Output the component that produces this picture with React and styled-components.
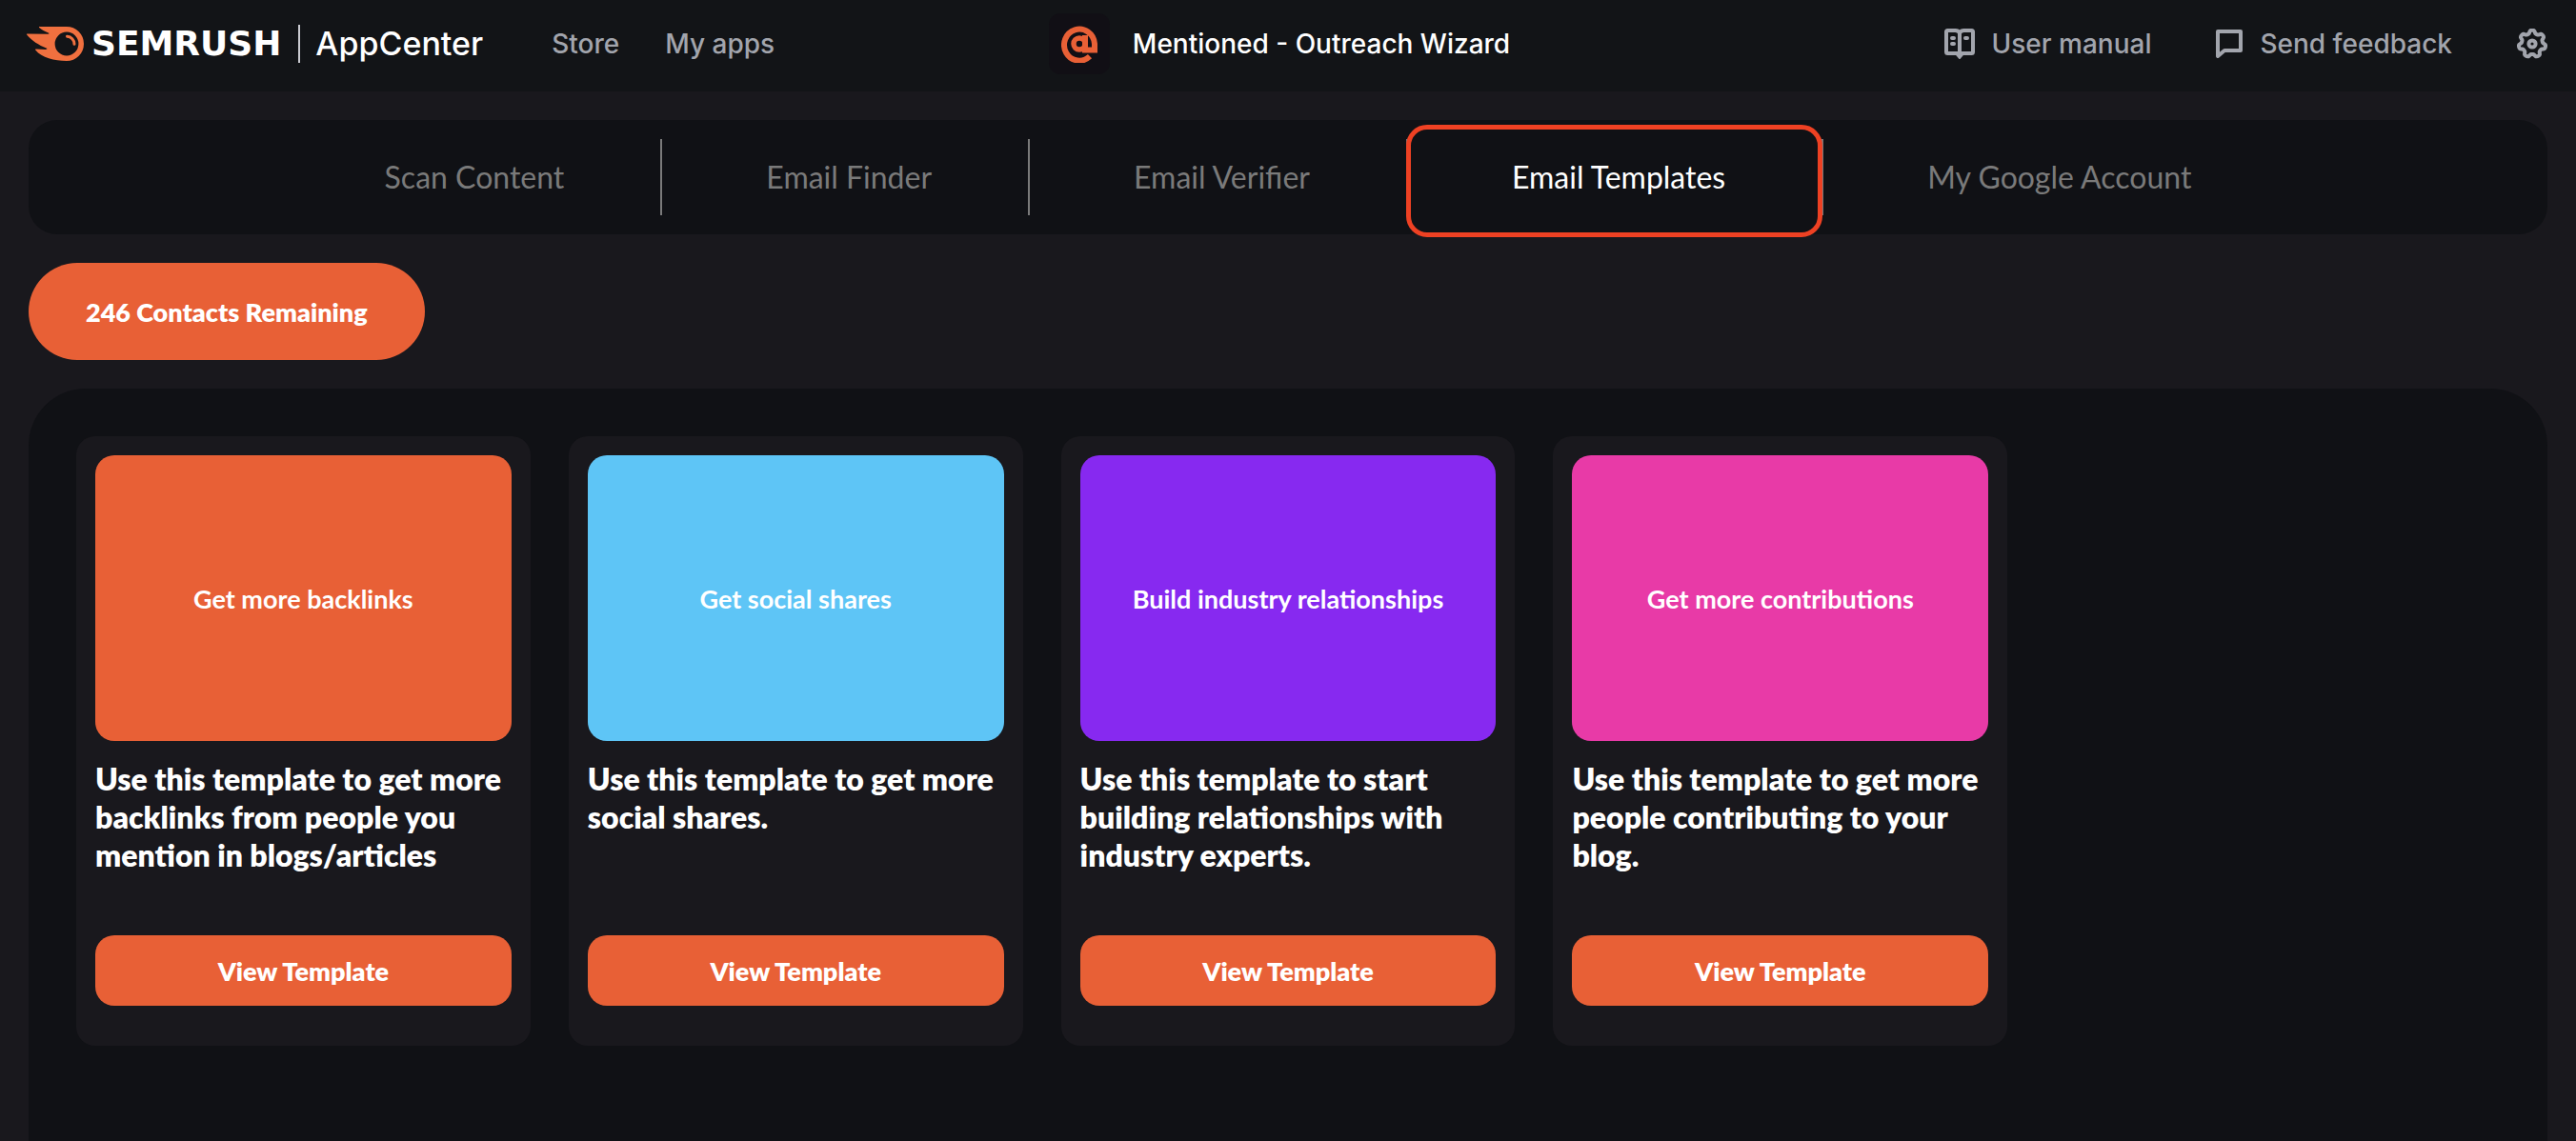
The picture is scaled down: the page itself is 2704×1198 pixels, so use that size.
import React from "react";
import styled, { createGlobalStyle } from "styled-components";

const tabs = [
  { label: "Scan Content" },
  { label: "Email Finder" },
  { label: "Email Verifier" },
  { label: "Email Templates", active: true },
  { label: "My Google Account" },
];

const templates = [
  {
    title: "Get more backlinks",
    color: "#e86036",
    text: "Use this template to get more backlinks from people you mention in blogs/articles",
  },
  {
    title: "Get social shares",
    color: "#5ec5f6",
    text: "Use this template to get more social shares.",
  },
  {
    title: "Build industry relationships",
    color: "#8729f0",
    text: "Use this template to start building relationships with industry experts.",
  },
  {
    title: "Get more contributions",
    color: "#e83aa7",
    text: "Use this template to get more people contributing to your blog.",
  },
];

// outline of a soft gear with seven teeth, one of them pointing up
const gearPoints = Array.from({ length: 112 }, (_, i) => {
  const angle = (i / 112) * Math.PI * 2;
  const wave = Math.tanh(2 * Math.cos(7 * angle));
  const radius = 12.6 + 1.7 * wave;
  const x = 16 + radius * Math.sin(angle);
  const y = 16 - radius * Math.cos(angle);
  return `${x.toFixed(2)},${y.toFixed(2)}`;
}).join(" ");

function FlameIcon() {
  return (
    <svg width="60" height="36" viewBox="0 0 60 36" fill="none">
      <path
        fill="#f0703f"
        fillRule="evenodd"
        d="M13.400 0H42a18 18 0 0 1 0 36C29 36 16 33 9.200 24.600c-.5-.8 0-1.200.8-1.100l9.800.4c1.800.1 1.900-1 .8-1.400C13 19.500 5 14.500.2 8.500c-.5-.7 0-1.100.7-1L22.500 7.800c1.200 0 1.200-.8.3-1.200C19 5 15.500 3.200 13.200 1c-.5-.5-.3-1 .2-1ZM42 5.600a12.400 12.400 0 1 0 0 24.800a12.400 12.400 0 0 0 0-24.800Z"
      />
      <path
        d="M42.500 10.200a8 8 0 0 1 7.500 8"
        stroke="#f0703f"
        strokeWidth="3"
        strokeLinecap="round"
      />
    </svg>
  );
}

function AtIcon() {
  return (
    <svg width="38" height="40" viewBox="0 0 38 40" fill="none">
      <path
        d="M30 33.200A16 16.500 0 1 1 35 20v6.500h-10V11"
        stroke="#e86036"
        strokeWidth="6"
      />
      <circle cx="19" cy="20" r="6" stroke="#e86036" strokeWidth="5.500" />
    </svg>
  );
}

function ManualIcon() {
  return (
    <svg width="32" height="32" viewBox="0 0 32 32" fill="none">
      <path
        d="M16 4.500C15 2.800 13.500 2 11.500 2H3.500A1.500 1.500 0 0 0 2 3.500v21A1.500 1.500 0 0 0 3.500 26H13l3 3.500 3-3.500h9.500a1.500 1.500 0 0 0 1.500-1.500v-21A1.500 1.500 0 0 0 28.500 2h-8C18.500 2 17 2.800 16 4.500ZM16 4.500V28"
        stroke="currentColor"
        strokeWidth="4"
      />
      <path
        d="M8 10h2M8 16h2M22 10h2"
        stroke="currentColor"
        strokeWidth="4"
        strokeLinecap="round"
      />
    </svg>
  );
}

function FeedbackIcon() {
  return (
    <svg width="28" height="30" viewBox="0 0 28 30" fill="none">
      <path
        d="M2 2h24v20H9l-7 6Z"
        stroke="currentColor"
        strokeWidth="4"
        strokeLinejoin="round"
      />
    </svg>
  );
}

function GearIcon() {
  return (
    <svg width="32" height="32" viewBox="0 0 32 32" fill="none">
      <polygon
        points={gearPoints}
        stroke="currentColor"
        strokeWidth="4"
        strokeLinejoin="round"
      />
      <circle cx="16" cy="16" r="3.600" stroke="currentColor" strokeWidth="4" />
    </svg>
  );
}

export default function App() {
  return (
    <>
      <GlobalStyle />
      <Page>
        <Header>
          <HeaderLeft>
            <Brand href="#">
              <FlameIcon />
              <Wordmark>SEMRUSH</Wordmark>
              <BrandLine />
              <Product>AppCenter</Product>
            </Brand>
            <HeaderLink href="#">Store</HeaderLink>
            <HeaderLink href="#">My apps</HeaderLink>
          </HeaderLeft>
          <AppTitle>
            <AppBadge>
              <AtIcon />
            </AppBadge>
            <AppName>Mentioned - Outreach Wizard</AppName>
          </AppTitle>
          <HeaderRight>
            <HeaderLink href="#">
              <ManualIcon />
              User manual
            </HeaderLink>
            <HeaderLink href="#">
              <FeedbackIcon />
              Send feedback
            </HeaderLink>
            <IconButton aria-label="Settings">
              <GearIcon />
            </IconButton>
          </HeaderRight>
        </Header>

        <Main>
          <Tabs>
            {tabs.map((tab) => (
              <Tab key={tab.label} href="#" $active={tab.active}>
                {tab.label}
              </Tab>
            ))}
          </Tabs>
          <Contacts>246 Contacts Remaining</Contacts>
          <Panel>
            {templates.map((item) => (
              <Card key={item.title}>
                <Cover $color={item.color}>{item.title}</Cover>
                <Description>{item.text}</Description>
                <ViewButton>View Template</ViewButton>
              </Card>
            ))}
          </Panel>
        </Main>
      </Page>
    </>
  );
}

// Styled Components ............

const GlobalStyle = createGlobalStyle`
  * {
    box-sizing: border-box;
  }
  body {
    margin: 0;
    background: #19181d;
    font-family: Lato, sans-serif;
    color: #fff;
  }
  a {
    color: inherit;
    text-decoration: none;
  }
  button {
    border: 0;
    font-family: inherit;
    color: inherit;
    cursor: pointer;
  }
  svg {
    display: block;
    flex-shrink: 0;
  }
`;
const Page = styled.div`
  min-height: 100vh;
  display: flex;
  flex-direction: column;
`;
const Header = styled.header`
  display: grid;
  grid-template-columns: 1fr auto 1fr;
  align-items: center;
  height: 96px;
  padding: 0 30px 4px 12px;
  background: #121417;
  font-family: Inter, sans-serif;
  white-space: nowrap;
`;
const HeaderLeft = styled.div`
  display: flex;
  align-items: center;
  gap: 48px;
`;
const Brand = styled.a`
  display: flex;
  align-items: center;
  padding: 0 24px 0 16px;
`;
const Wordmark = styled.span`
  margin-left: 8px;
  font-family: "DejaVu Sans", sans-serif;
  font-size: 36px;
  font-weight: 700;
  line-height: 40px;
`;
const BrandLine = styled.span`
  width: 2px;
  height: 40px;
  margin: 0 16px 0 18px;
  background: #c9cad0;
`;
const Product = styled.span`
  font-size: 34px;
  font-weight: 500;
  line-height: 40px;
`;
const HeaderLink = styled.a`
  display: flex;
  align-items: center;
  gap: 18px;
  font-size: 28px;
  font-weight: 500;
  line-height: 40px;
  color: #a2a5ad;
`;
const AppTitle = styled.div`
  display: flex;
  align-items: center;
  gap: 24px;
`;
const AppBadge = styled.div`
  display: flex;
  align-items: center;
  justify-content: center;
  width: 64px;
  height: 64px;
  border-radius: 12px;
  background: #110f15;
`;
const AppName = styled.h1`
  margin: 0;
  font-size: 28px;
  font-weight: 500;
  line-height: 40px;
`;
const HeaderRight = styled.div`
  display: flex;
  align-items: center;
  justify-content: flex-end;
  gap: 68px;
`;
const IconButton = styled.button`
  padding: 0;
  background: none;
  color: #a2a5ad;
`;
const Main = styled.main`
  flex: 1;
  display: flex;
  flex-direction: column;
  align-items: flex-start;
  gap: 30px;
  padding: 30px 30px 0;
`;
const Tabs = styled.nav`
  align-self: stretch;
  display: flex;
  align-items: center;
  justify-content: center;
  gap: 8px;
  height: 120px;
  border-radius: 30px;
  background: #101115;
`;
const Tab = styled.a`
  position: relative;
  padding: 0 101px;
  font-size: 32px;
  line-height: 80px;
  white-space: nowrap;
  color: ${(props) => (props.$active ? "#fff" : "#7a7a7a")};
  border-right: 2px solid #7a7a7a;
  &:last-child {
    border-right: 0;
  }
  ${(props) =>
    props.$active &&
    `
    &::after {
      content: "";
      position: absolute;
      inset: -15px -1px -23px -10px;
      border: 5px solid #ee4123;
      border-radius: 22px;
    }
  `}
`;
const Contacts = styled.button`
  height: 102px;
  padding: 0 60px;
  border-radius: 51px;
  background: #e86036;
  font-size: 27px;
  font-weight: 800;
`;
const Panel = styled.section`
  flex: 1;
  align-self: stretch;
  display: grid;
  grid-template-columns: repeat(5, 1fr);
  align-items: start;
  gap: 40px;
  padding: 50px;
  border-radius: 60px 60px 0 0;
  background: #101115;
`;
const Card = styled.article`
  display: flex;
  flex-direction: column;
  padding: 20px 20px 42px;
  border-radius: 20px;
  background: #19181d;
`;
const Cover = styled.div`
  display: flex;
  align-items: center;
  justify-content: center;
  height: 300px;
  border-radius: 20px;
  background: ${(props) => props.$color};
  font-size: 27px;
  font-weight: 700;
`;
const Description = styled.p`
  min-height: 184px;
  margin: 20px 0 0;
  font-size: 32px;
  font-weight: 800;
  line-height: 40px;
`;
const ViewButton = styled.button`
  height: 74px;
  border-radius: 20px;
  background: #e86036;
  font-size: 27px;
  font-weight: 800;
`;
